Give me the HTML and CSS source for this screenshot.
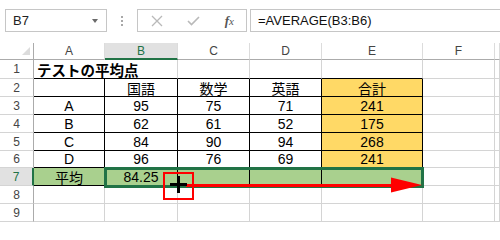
FILE: index.html
```html
<!DOCTYPE html>
<html lang="ja">
<head>
<meta charset="utf-8">
<link rel="stylesheet" href="styles.css">
</head>
<body>
<div class="toolbar">
  <div class="namebox"><span class="nb-text">B7</span><span class="caret"></span></div>
  <div class="grip"><i></i><i></i><i></i></div>
  <div class="fxbox">
    <svg class="ico" width="12" height="12" viewBox="0 0 12 12"><path d="M1 1 L11 11 M11 1 L1 11" stroke="#b9b9b9" stroke-width="1.3" fill="none"/></svg>
    <svg class="ico" width="13" height="10" viewBox="0 0 13 10"><path d="M1 5 L4.5 8.5 L12 1" stroke="#b9b9b9" stroke-width="1.6" fill="none"/></svg>
    <span class="fx">f<span class="fxx">x</span></span>
  </div>
  <div class="formula">=AVERAGE(B3:B6)</div>
</div>
<div class="sheet">
  <div class="grid">
    <!-- header row -->
    <div class="corner"><span class="tri"></span></div>
    <div class="ch">A</div>
    <div class="ch on">B</div>
    <div class="ch">C</div>
    <div class="ch">D</div>
    <div class="ch">E</div>
    <div class="ch">F</div>
    <div class="ch"></div>
    <!-- row 1 -->
    <div class="rh">1</div>
    <div class="c bb title">テストの平均点</div>
    <div class="c bb"></div>
    <div class="c bb"></div>
    <div class="c bb"></div>
    <div class="c"></div>
    <div class="c"></div>
    <!-- row 2 -->
    <div class="rh">2</div>
    <div class="c bk"></div>
    <div class="c bk">国語</div>
    <div class="c bk">数学</div>
    <div class="c bk">英語</div>
    <div class="c bk y">合計</div>
    <div class="c"></div>
    <div class="c"></div>
    <!-- row 3 -->
    <div class="rh">3</div>
    <div class="c bk">A</div>
    <div class="c bk">95</div>
    <div class="c bk">75</div>
    <div class="c bk">71</div>
    <div class="c bk y">241</div>
    <div class="c"></div>
    <div class="c"></div>
    <!-- row 4 -->
    <div class="rh">4</div>
    <div class="c bk">B</div>
    <div class="c bk">62</div>
    <div class="c bk">61</div>
    <div class="c bk">52</div>
    <div class="c bk y">175</div>
    <div class="c"></div>
    <div class="c"></div>
    <!-- row 5 -->
    <div class="rh">5</div>
    <div class="c bk">C</div>
    <div class="c bk">84</div>
    <div class="c bk">90</div>
    <div class="c bk">94</div>
    <div class="c bk y">268</div>
    <div class="c"></div>
    <div class="c"></div>
    <!-- row 6 -->
    <div class="rh">6</div>
    <div class="c bk">D</div>
    <div class="c bk">96</div>
    <div class="c bk">76</div>
    <div class="c bk">69</div>
    <div class="c bk y">241</div>
    <div class="c"></div>
    <div class="c"></div>
    <!-- row 7 -->
    <div class="rh on">7</div>
    <div class="c bk g">平均</div>
    <div class="c bk g">84.25</div>
    <div class="c bk g"></div>
    <div class="c bk g"></div>
    <div class="c bk g"></div>
    <div class="c"></div>
    <div class="c"></div>
    <!-- row 8 -->
    <div class="rh">8</div>
    <div class="c"></div>
    <div class="c"></div>
    <div class="c"></div>
    <div class="c"></div>
    <div class="c"></div>
    <div class="c"></div>
    <div class="c"></div>
    <!-- row 9 -->
    <div class="rh">9</div>
    <div class="c"></div>
    <div class="c"></div>
    <div class="c"></div>
    <div class="c"></div>
    <div class="c"></div>
    <div class="c"></div>
    <div class="c"></div>
  </div>
  <div class="selbox"></div>
  <svg class="drag" width="500" height="179" viewBox="0 0 500 179">
    <rect x="186" y="141" width="207" height="3" fill="#ff0000"/>
    <polygon points="391,134.5 422,142 391,149.5" fill="#ff0000"/>
    <rect x="164" y="130" width="29" height="26" fill="none" stroke="#ff0000" stroke-width="2"/>
    <rect x="177" y="133" width="3" height="17" fill="#000"/>
    <rect x="170" y="140" width="17" height="3" fill="#000"/>
  </svg>
</div>
</body>
</html>
```

FILE: styles.css
```css
html, body {
  margin: 0;
  padding: 0;
  background: #fff;
  width: 500px;
  height: 222px;
  overflow: hidden;
}

body {
  font-family: "Liberation Sans", "Noto Sans CJK JP", sans-serif;
  color: #000;
}

.toolbar {
  height: 43px;
  box-sizing: border-box;
  padding: 9px 0 0 5px;
  display: flex;
  align-items: flex-start;
}

.namebox {
  width: 102px;
  height: 23px;
  box-sizing: border-box;
  border: 1px solid #c6c6c6;
  display: flex;
  align-items: center;
  justify-content: space-between;
  padding: 0 8px 0 7px;
}

.nb-text {
  font-size: 13px;
  color: #222;
}

.caret {
  width: 0;
  height: 0;
  border-left: 3.5px solid transparent;
  border-right: 3.5px solid transparent;
  border-top: 4px solid #6a6a6a;
}

.grip {
  width: 30px;
  height: 23px;
  display: flex;
  flex-direction: column;
  align-items: center;
  justify-content: center;
  gap: 2px;
}

.grip i {
  display: block;
  width: 2px;
  height: 2px;
  background: #a8a8a8;
}

.fxbox {
  width: 110px;
  height: 23px;
  box-sizing: border-box;
  border: 1px solid #c6c6c6;
  display: flex;
  align-items: center;
  padding: 0 12px 0 13px;
  justify-content: space-between;
}

.ico {
  display: block;
}

.fx {
  font-family: "Liberation Serif", serif;
  font-style: italic;
  font-size: 13px;
  color: #555;
  font-weight: bold;
}

.fxx {
  font-size: 11px;
  font-weight: normal;
}

.formula {
  flex: 1;
  margin-left: 3px;
  margin-right: -4px;
  height: 23px;
  box-sizing: border-box;
  border: 1px solid #c6c6c6;
  font-size: 13px;
  color: #111;
  display: flex;
  align-items: center;
  padding-left: 7px;
}

.sheet {
  position: relative;
  height: 179px;
}

.grid {
  display: grid;
  grid-template-columns: 34px 71px 73px 72px 72px 101px 72px 5px;
  grid-template-rows: 17px 19px 18px 18px 18px 18px 17px 18px 18px 18px;
}

.grid > div {
  box-sizing: border-box;
}

.corner {
  border-right: 1px solid #ababab;
  border-bottom: 1px solid #ababab;
  position: relative;
  display: flex;
  align-items: flex-end;
  justify-content: flex-end;
  padding: 0 3px 4px 0;
}

.tri {
  width: 0;
  height: 0;
  border-left: 8px solid transparent;
  border-bottom: 8px solid #dcdcdc;
}

.ch {
  border-right: 1px solid #dcdcdc;
  border-bottom: 1px solid #ababab;
  font-size: 12px;
  color: #444;
  display: flex;
  align-items: center;
  justify-content: center;
}

.ch.on {
  background: #e1e1e1;
  border-bottom: 2px solid #217346;
  color: #217346;
}

.rh {
  border-right: 1px solid #ababab;
  border-bottom: 1px solid #d4d4d4;
  font-size: 12px;
  color: #444;
  display: flex;
  align-items: center;
  justify-content: center;
}

.rh.on {
  background: #e1e1e1;
  border-right: 2px solid #217346;
  color: #217346;
}

.c {
  border-right: 1px solid #d4d4d4;
  border-bottom: 1px solid #d4d4d4;
  font-size: 14px;
  display: flex;
  align-items: center;
  justify-content: center;
  white-space: nowrap;
}

.c.bb {
  border-bottom-color: #000;
}

.c.bk {
  border-right-color: #000;
  border-bottom-color: #000;
}

.c.title {
  grid-column: span 2;
  justify-content: flex-start;
  padding-left: 3px;
  font-weight: bold;
  font-size: 14.5px;
}

.c.y {
  background: #ffd966;
}

.c.g {
  background: #a9d08e;
}

.selbox {
  position: absolute;
  left: 104px;
  top: 124px;
  width: 320px;
  height: 21px;
  box-sizing: border-box;
  border: 3px solid #217346;
}

.drag {
  position: absolute;
  left: 0;
  top: 0;
  pointer-events: none;
}
```
